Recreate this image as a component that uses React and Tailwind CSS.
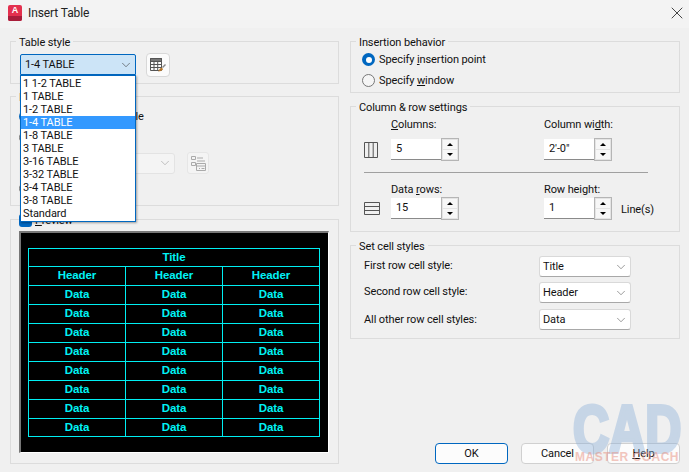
import { ChevronDown, X } from 'lucide-react';

const STYLES = ['1 1-2 TABLE', '1 TABLE', '1-2 TABLE', '1-4 TABLE', '1-8 TABLE', '3 TABLE', '3-16 TABLE', '3-32 TABLE', '3-4 TABLE', '3-8 TABLE', 'Standard'];
const DATA_ROWS = [0, 1, 2, 3, 4, 5, 6, 7];

function Group({ label, className, children }) {
  return (
    <div className={`relative border border-[#dcdcdc] ${className}`}>
      <span className="absolute left-[5px] top-[-7px] bg-[#f0f0f0] px-[3px] leading-[16px]">{label}</span>
      {children}
    </div>
  );
}

function Radio({ on, children }) {
  return (
    <div className="flex h-[21px] items-center gap-[4px]">
      {on ? (
        <span className="flex h-[13px] w-[13px] items-center justify-center rounded-full bg-[#0067c0]">
          <span className="h-[6px] w-[6px] rounded-full bg-white" />
        </span>
      ) : (
        <span className="h-[13px] w-[13px] rounded-full border border-[#777] bg-[#f5f5f5]" />
      )}
      <span>{children}</span>
    </div>
  );
}

function Spinner({ value }) {
  return (
    <div className="flex h-[23px]">
      <div className="my-px w-[50px] border-b border-[#8a8a8a] bg-white pl-[5px] leading-[20px]">{value}</div>
      <div className="flex w-[18px] flex-col justify-between border border-[#b5b5b5] bg-[#e4e4e4] p-px">
        <span className="flex h-[9px] items-center justify-center bg-[#f7f7f7]">
          <span className="h-0 w-0 border-x-[3px] border-b-[3px] border-x-transparent border-b-black" />
        </span>
        <span className="flex h-[9px] items-center justify-center bg-[#f7f7f7]">
          <span className="h-0 w-0 border-x-[3px] border-t-[3px] border-x-transparent border-t-black" />
        </span>
      </div>
    </div>
  );
}

function CellSelect({ value }) {
  return (
    <div className="flex h-[21px] w-[92px] items-center justify-between rounded-[3px] border border-[#d9d9d9] border-b-[#a8a8a8] bg-white pl-[3px] pr-[2px]">
      <span>{value}</span>
      <ChevronDown size={14} strokeWidth={1} color="#555" />
    </div>
  );
}

function Btn({ primary, children }) {
  return (
    <div className={`flex h-[21px] w-[73px] items-center justify-center rounded-[4px] bg-[#fcfcfc] border ${primary ? 'border-[#0067c0]' : 'border-[#d0d0d0]'}`}>
      {children}
    </div>
  );
}

function PreviewTable() {
  const cell = 'border border-[#00eef2] p-0 pb-px text-center leading-[15px]';
  return (
    <table className="w-[292px] table-fixed border-collapse font-['Liberation_Sans',sans-serif] text-[11.5px] font-bold text-[#00f2f5]">
      <tbody>
        <tr className="h-[18px]"><td colSpan={3} className={cell}>Title</td></tr>
        <tr className="h-[19px]">
          <td className={cell}>Header</td><td className={cell}>Header</td><td className={cell}>Header</td>
        </tr>
        {DATA_ROWS.map(r => (
          <tr key={r} className={r === 7 ? 'h-[18px]' : 'h-[19px]'}>
            <td className={cell}>Data</td><td className={cell}>Data</td><td className={cell}>Data</td>
          </tr>
        ))}
      </tbody>
    </table>
  );
}

export default function App() {
  return (
    <div className="relative h-[472px] w-[689px] overflow-hidden bg-[#f0f0f0] font-['Roboto',sans-serif] text-[11px] leading-[16px] tracking-[-0.1px] text-[#111]">
      {/* title bar */}
      <div className="flex h-[28px] items-center bg-[#f3f3f3] pb-[2px] pl-[8px] pr-[2px]">
        <div className="flex h-[16px] w-[14px] flex-col overflow-hidden rounded-[2px] bg-[#e3304e] text-center font-['Liberation_Sans',sans-serif] text-[9px] font-bold leading-[11px] text-white">
          <span className="h-[11px]">A</span>
          <span className="h-[5px] bg-[#a81d3a]" />
        </div>
        <span className="ml-[6px] text-[12px] text-[#222]">Insert Table</span>
        <X className="ml-auto" size={20} strokeWidth={1} color="#222" />
      </div>

      <div className="flex gap-[11px] pl-[10px] pt-[13px]">
        {/* left column */}
        <div className="flex w-[329px] flex-col">
          <Group label="Table style" className="h-[43px]">
            <div className="flex items-start gap-[10px] pl-[9px] pt-[11px]">
              <div className="h-[21px] w-[116px]" />
              <div className="flex h-[24px] w-[24px] items-center justify-center rounded-[4px] border border-[#d8d8d8] bg-[#fbfbfb]">
                <svg width="18" height="16" viewBox="0 0 18 16" fill="none" stroke="#555" strokeWidth="1">
                  <path d="M1.5 1.5h11v12h-11z M1.5 4.5h11 M1.5 7.5h11 M1.5 10.5h11 M5 4.5v9 M8.7 4.5v9" />
                  <path d="M1.5 1.5h11v3h-11z" fill="#777" />
                  <path d="M9 14.5l2-3 2-1 1 2-2 1.5z" fill="#b5772d" stroke="none" />
                  <path d="M13.5 10.5l3-3" stroke="#888" strokeWidth="1.5" />
                </svg>
              </div>
            </div>
          </Group>

          <Group label="Insert options" className="mt-[12px] h-[110px]">
            <div className="pl-[8px] pt-[9px]">
              <Radio on>Start from empty table</Radio>
              <Radio>From a data link</Radio>
              <div className="mt-[4px] flex items-center gap-[12px] pl-[17px]">
                <div className="flex h-[21px] w-[139px] items-center justify-end rounded-[3px] border border-[#e3e3e3] bg-[#f4f4f4] pr-[2px]">
                  <ChevronDown size={14} strokeWidth={1} color="#999" />
                </div>
                <div className="flex h-[22px] w-[22px] items-center justify-center rounded-[3px] border border-[#e6e6e6] bg-[#f4f4f4]">
                  <svg width="17" height="17" viewBox="0 0 17 17" fill="none" stroke="#aaa" strokeWidth="1">
                    <path d="M1.5 1.5h4v3h-4z M1.5 7.5h4v3h-4z M7 3h6 M7 6h8 M6.5 8.5h9v7h-9z M6.5 11h9 M9 13.5h1 M11.5 13.5h3" />
                  </svg>
                </div>
              </div>
              <div className="mt-[4px]">
                <Radio>From object data</Radio>
              </div>
            </div>
          </Group>

          <Group className="mt-[13px] h-[245px]">
            <div className="absolute left-[8px] top-[-7px] flex items-start gap-[3px] bg-[#f0f0f0] pr-[3px]">
              <span className="mt-px h-[13px] w-[13px] rounded-[3px] bg-[#0067c0]" />
              <span><u>P</u>review</span>
            </div>
            <div className="ml-[8px] mt-[11px] h-[222px] w-[310px] border-b border-l-2 border-r border-t-2 border-b-white border-l-[#777] border-r-white border-t-[#777] bg-black pl-[7px] pt-[15px]">
              <PreviewTable />
            </div>
          </Group>
        </div>

        {/* right column */}
        <div className="flex h-[423px] w-[330px] flex-col gap-[13px]">
          <Group label="Insertion behavior" className="h-[52px]">
            <div className="pl-[11px] pt-[7px]">
              <Radio on>Specify <u>i</u>nsertion point</Radio>
              <Radio>Specify <u>w</u>indow</Radio>
            </div>
          </Group>

          <Group label="Column &amp; row settings" className="h-[126px]">
            <div className="grid grid-cols-[27px_153px_1fr] pl-[13px] pt-[10px]">
              <span />
              <span className="h-[21px]"><u>C</u>olumns:</span>
              <span className="h-[21px]">Column wi<u>d</u>th:</span>
              <div className="flex items-center">
                <svg width="14" height="16" viewBox="0 0 14 16" fill="none" stroke="#555"><path d="M.5.5h13v15H.5z M4.8.5v15 M9.2.5v15" /></svg>
              </div>
              <Spinner value="5" />
              <Spinner value={"2'-0\""} />
            </div>
            <div className="ml-[13px] mt-[11px] w-[284px] border-t border-[#a0a0a0]" />
            <div className="grid grid-cols-[27px_153px_1fr] pl-[13px] pt-[9px]">
              <span />
              <span className="h-[15px]">Data <u>r</u>ows:</span>
              <span className="h-[15px]">Row hei<u>g</u>ht:</span>
              <div className="flex items-center">
                <svg width="16" height="13" viewBox="0 0 16 13" fill="none" stroke="#555"><path d="M.5.5h15v12H.5z M.5 4.5h15 M.5 8.5h15" /></svg>
              </div>
              <Spinner value="15" />
              <div className="flex items-center gap-[9px]">
                <Spinner value="1" />
                <span className="pt-[3px]">Line(s)</span>
              </div>
            </div>
          </Group>

          <Group label="Set cell styles" className="h-[94px]">
            <div className="flex flex-col pl-[13px] pr-[48px] pt-[10px]">
              <div className="flex h-[26px] items-start justify-between"><span className="pt-[2px]">First row cell style:</span><CellSelect value="Title" /></div>
              <div className="flex h-[27px] items-start justify-between"><span className="pt-[2px]">Second row cell style:</span><CellSelect value="Header" /></div>
              <div className="flex items-start justify-between"><span className="pt-[3px]">All other row cell styles:</span><CellSelect value="Data" /></div>
            </div>
          </Group>

          <div className="mt-auto flex justify-end gap-[13px]">
            <Btn primary>OK</Btn>
            <Btn>Cancel</Btn>
            <Btn><span><u>H</u>elp</span></Btn>
          </div>
        </div>
      </div>

      {/* combo and its open list, on top of the groups */}
      <div className="absolute left-[20px] top-[54px] w-[116px]">
        <div className="flex h-[21px] items-center justify-between rounded-t-[2px] border border-[#0067c0] bg-[#cce4f7] pl-[4px] pr-[2px]">
          <span>1-4 TABLE</span>
          <ChevronDown size={14} strokeWidth={1} color="#333" />
        </div>
        <div className="border border-[#0067c0] bg-white py-px shadow-[1px_1px_2px_rgba(0,0,0,0.35)]">
          {STYLES.map(s => (
            <div key={s} className={`h-[13px] pl-[2px] leading-[13px] ${s === '1-4 TABLE' ? 'bg-[#3399ff] text-white' : ''}`}>{s}</div>
          ))}
        </div>
      </div>

      {/* watermark */}
      <div className="pointer-events-none absolute left-[573px] top-[405px] w-[108px] text-center font-['Liberation_Sans',sans-serif] font-bold">
        <div className="h-[45px] origin-top scale-y-[1.35] text-[50px] leading-[36px] tracking-normal text-[#88aed8] opacity-40 [-webkit-text-stroke:3px_#88aed8]">CAD</div>
        <div className="whitespace-nowrap text-[12px] leading-[14px] tracking-[0.5px] text-[#e88f80] opacity-50">MASTER COACH</div>
      </div>
    </div>
  );
}
